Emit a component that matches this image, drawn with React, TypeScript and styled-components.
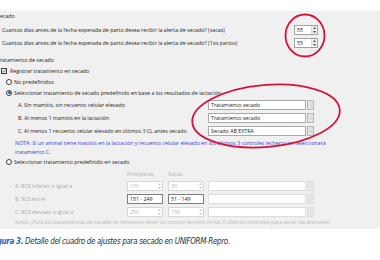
import styled, {createGlobalStyle} from 'styled-components'

const GlobalStyle = createGlobalStyle`
  html, body {
    margin: 0;
    padding: 0;
    background: #fff;
  }
`

const Figure = styled.div`
  position: relative;
  width: 380px;
  height: 260px;
  overflow: hidden;
  background: #fff;
  padding-top: 10px;
  box-sizing: border-box;
`

const Panel = styled.div`
  background: #f0f0f0;
  border-top: 1px solid #fbfbfb;
  padding-bottom: 3px;
  font-family: 'Open Sans', 'Liberation Sans', sans-serif;
  font-size: 5.3px;
  color: #1c1c1c;
`

const Row = styled.div<{$h: number; $indent?: number; $top?: number}>`
  display: flex;
  align-items: center;
  height: ${p => p.$h}px;
  margin-top: ${p => p.$top ?? 0}px;
  padding-left: ${p => p.$indent ?? 0}px;
  white-space: nowrap;
`

const GroupLabel = styled.span`
  margin-left: -3px;
`

const Label = styled.span<{$w?: number; $muted?: boolean}>`
  display: inline-block;
  width: ${p => (p.$w ? `${p.$w}px` : 'auto')};
  color: ${p => (p.$muted ? '#a9a9a9' : 'inherit')};
  overflow: visible;
`

const SpinBox = styled.div<{$w: number; $disabled?: boolean}>`
  display: flex;
  width: ${p => p.$w}px;
  height: 10px;
  box-sizing: border-box;
  border: 1px solid ${p => (p.$disabled ? '#d6d6d6' : '#a2a2a2')};
  background: #fff;
  color: ${p => (p.$disabled ? '#b4b4b4' : '#222')};
`

const SpinValue = styled.span`
  flex: 1;
  padding-left: 2px;
  line-height: 8px;
`

const SpinArrows = styled.span<{$disabled?: boolean}>`
  width: 5px;
  display: flex;
  flex-direction: column;
  align-items: center;
  justify-content: space-around;
  background: ${p => (p.$disabled ? '#fff' : '#ededed')};
  border-left: 1px solid ${p => (p.$disabled ? '#fff' : '#dadada')};
`

const TextField = styled.div<{$w: number; $border?: string; $muted?: boolean}>`
  display: flex;
  align-items: center;
  width: ${p => p.$w}px;
  height: 10px;
  box-sizing: border-box;
  padding-left: 2px;
  border: 1px solid ${p => p.$border ?? '#a9a9a9'};
  background: #fff;
  color: ${p => (p.$muted ? '#b4b4b4' : '#1c1c1c')};
`

const DotsButton = styled.div<{$disabled?: boolean}>`
  display: flex;
  align-items: center;
  justify-content: center;
  width: 7px;
  height: 10px;
  margin-left: 1px;
  box-sizing: border-box;
  border: 1px solid ${p => (p.$disabled ? '#dedede' : '#b5b5b5')};
  background: ${p => (p.$disabled ? '#e6e6e6' : '#e3e3e3')};
  color: ${p => (p.$disabled ? '#c4c4c4' : '#6a6a6a')};
  font-size: 4px;
  line-height: 1;
  letter-spacing: -0.5px;
`

const Check = styled.span`
  display: inline-flex;
  align-items: center;
  justify-content: center;
  width: 6px;
  height: 6px;
  box-sizing: border-box;
  border: 1px solid #3a3a3a;
  background: #fff;
  margin-right: 3px;
`

const Radio = styled.span<{$on?: boolean}>`
  display: inline-flex;
  align-items: center;
  justify-content: center;
  width: 6px;
  height: 6px;
  box-sizing: border-box;
  border-radius: 50%;
  border: 1px solid #3a3a3a;
  background: #fff;
  margin-right: 2px;

  &::after {
    content: '';
    display: ${p => (p.$on ? 'block' : 'none')};
    width: 3px;
    height: 3px;
    border-radius: 50%;
    background: #2a5fb8;
  }
`

const Note = styled.div`
  margin-top: 2px;
  padding-left: 15px;
  line-height: 8.5px;
  color: #3b3bd0;
`

const ColHead = styled.span<{$w: number}>`
  display: inline-block;
  width: ${p => p.$w}px;
  color: #b2b2b2;
`

const Warning = styled.div`
  height: 8px;
  line-height: 8px;
  padding-left: 15px;
  color: #b8b8b8;
  white-space: nowrap;
`

const Caption = styled.div`
  padding-top: 8px;
  line-height: 10px;
  font-family: 'Liberation Sans Narrow', 'DejaVu Sans Condensed', 'Liberation Sans', sans-serif;
  font-stretch: condensed;
  font-style: italic;
  font-size: 8px;
  letter-spacing: -0.35px;
  color: #2e323c;
  white-space: nowrap;
`

const FigNo = styled.span`
  margin-left: -10px;
  color: #2367b4;
  font-weight: bold;
`

const Marks = styled.svg`
  position: absolute;
  top: 0;
  left: 0;
  pointer-events: none;
`

const Arrows = ({disabled}: {disabled?: boolean}) => (
  <SpinArrows $disabled={disabled}>
    <svg width="3" height="2" viewBox="0 0 3 2"><path d="M0 2 L1.5 0 L3 2Z" fill={disabled ? '#c8c8c8' : '#555'}/></svg>
    <svg width="3" height="2" viewBox="0 0 3 2"><path d="M0 0 L1.5 2 L3 0Z" fill={disabled ? '#c8c8c8' : '#555'}/></svg>
  </SpinArrows>
)

const Spin = ({value, w, disabled}: {value: string; w: number; disabled?: boolean}) => (
  <SpinBox $w={w} $disabled={disabled}>
    <SpinValue>{value}</SpinValue>
    <Arrows disabled={disabled}/>
  </SpinBox>
)

const treatments = [
    {label: 'A. Sin mamitis, sin recuento celular elevado', value: 'Tratamiento secado'},
    {label: 'B. Al menos 1 mamitis en la lactación', value: 'Tratamiento secado'},
    {label: 'C. Al menos 1 recuento celular elevado en últimos 3 CL antes secado', value: 'Secado AB EXTRA'},
]

const rcsRows = [
    {label: 'A. RCS inferior o igual a', first: '150', second: '30', spin: true},
    {label: 'B. RCS entre', first: '151 - 249', second: '51 - 149', spin: false},
    {label: 'C. RCS elevado o igual a', first: '250', second: '150', spin: true},
]

export default function App() {
    return (
        <>
            <GlobalStyle/>
            <Figure>
                <Panel>
                    <Row $h={10}><GroupLabel>Secado</GroupLabel></Row>
                    <Row $h={13} $top={2} $indent={2}>
                        <Label $w={292}>Cuantos días antes de la fecha esperada de parto desea recibir la alerta de secado? (vacas)</Label>
                        <Spin value="55" w={24}/>
                    </Row>
                    <Row $h={13} $indent={2}>
                        <Label $w={292}>Cuantos días antes de la fecha esperada de parto desea recibir la alerta de secado? (1os partos)</Label>
                        <Spin value="55" w={24}/>
                    </Row>

                    <Row $h={10} $top={6}><GroupLabel>Tratamiento de secado</GroupLabel></Row>
                    <Row $h={11} $indent={1}>
                        <Check>
                            <svg width="4" height="4" viewBox="0 0 4 4"><path d="M0.4 2 L1.6 3.2 L3.6 0.6" fill="none" stroke="#222" strokeWidth="0.8"/></svg>
                        </Check>
                        Registrar tratamiento en secado
                    </Row>
                    <Row $h={11} $indent={6}><Radio/>No predefinidos</Row>
                    <Row $h={11} $indent={6}>
                        <Radio $on/>Seleccionar tratamiento de secado predefinido en base a los resultados de lactación
                    </Row>
                    {treatments.map(t => (
                        <Row key={t.label} $h={13} $indent={18}>
                            <Label $w={190}>{t.label}</Label>
                            <TextField $w={98}>{t.value}</TextField>
                            <DotsButton>...</DotsButton>
                        </Row>
                    ))}
                    <Note>
                        NOTA: Si un animal tiene mastitis en la lactación y recuento celular elevado en los últimos 3 controles lecheros se seleccionará<br/>
                        tratamiento C.
                    </Note>
                    <Row $h={12} $indent={6}><Radio/>Seleccionar tratamiento predefinido en secado</Row>
                    <Row $h={11} $indent={127}>
                        <ColHead $w={41}>Primíparas</ColHead>
                        <ColHead $w={30}>Vacas</ColHead>
                    </Row>
                    {rcsRows.map(r => (
                        <Row key={r.label} $h={13} $indent={15}>
                            <Label $w={112} $muted>{r.label}</Label>
                            {r.spin ? (
                                <>
                                    <Spin value={r.first} w={36} disabled/>
                                    <Label $w={5}/>
                                    <Spin value={r.second} w={36} disabled/>
                                </>
                            ) : (
                                <>
                                    <TextField $w={36} $border="#7d7d7d">{r.first}</TextField>
                                    <Label $w={5}/>
                                    <TextField $w={36} $border="#7d7d7d">{r.second}</TextField>
                                </>
                            )}
                            <Label $w={4}/>
                            <TextField $w={98} $border="#dcdcdc" $muted/>
                            <DotsButton $disabled>...</DotsButton>
                        </Row>
                    ))}
                    <Warning>
                        Aviso: ¡Para los tratamientos de secado es necesario tener un control lechero en los 5 últimos controles para secar los animales!
                    </Warning>
                </Panel>
                <Caption>
                    <FigNo>Figura 3.</FigNo> Detalle del cuadro de ajustes para secado en UNIFORM-Repro.
                </Caption>
                <Marks width="380" height="260" viewBox="0 0 380 260">
                    <ellipse cx="305" cy="35.5" rx="19.5" ry="21" fill="none" stroke="#d5133a" strokeWidth="1.8"/>
                    <ellipse cx="266" cy="116" rx="74" ry="31" fill="none" stroke="#d5133a" strokeWidth="1.8" transform="rotate(-5 266 116)"/>
                </Marks>
            </Figure>
        </>
    )
}
